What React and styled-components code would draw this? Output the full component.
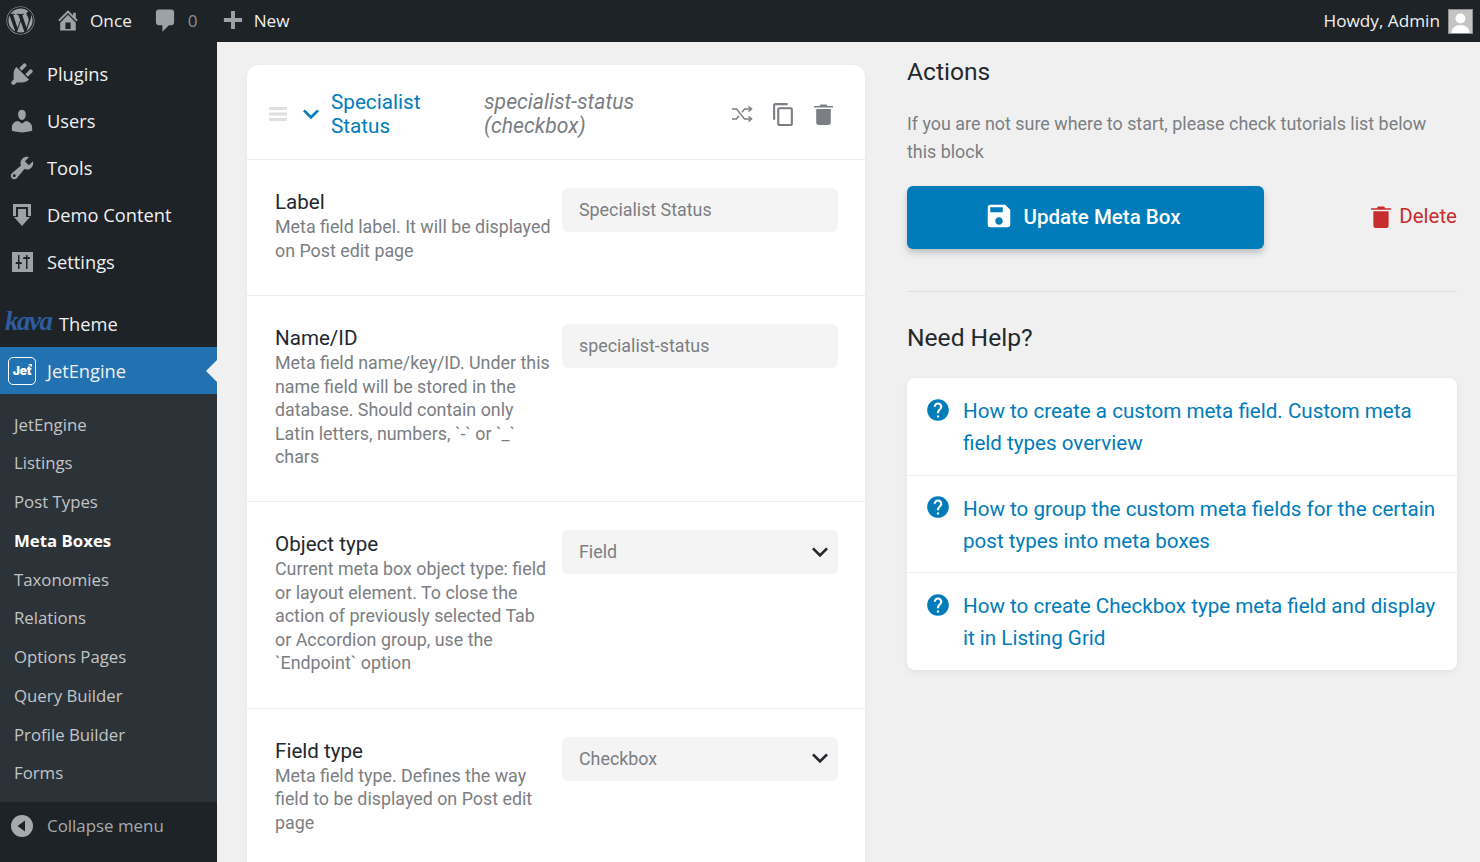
import React from "react";
import styled, { createGlobalStyle } from "styled-components";
import { MdContentCopy, MdSave, MdHelp, MdExpandMore } from "react-icons/md";
import { FaWordpress } from "react-icons/fa";

const GlobalStyle = createGlobalStyle`
  html, body { margin: 0; padding: 0; height: 100%; overflow: hidden; background: #f0f0f1; }
  * { box-sizing: border-box; }
  #root { height: 862px; overflow: hidden; }
`;

const Page = styled.div`
  width: 1480px;
  height: 862px;
  display: flex;
  flex-direction: column;
  overflow: hidden;
  font-family: Roboto, "Liberation Sans", sans-serif;
`;

const TopBar = styled.header`
  height: 42px;
  flex: none;
  background: #1d2327;
  display: flex;
  align-items: center;
  padding: 0 7px 2px 6px;
  font-family: "Open Sans", "Noto Sans", sans-serif;
  font-size: 17.2px;
  color: #f0f0f1;
  white-space: nowrap;
`;

const BarItem = styled.div`
  display: flex;
  align-items: center;
  gap: ${(p) => p.$gap ?? 9}px;
  margin-left: ${(p) => p.$left || 0}px;
  color: ${(p) => (p.$muted ? "#8c8f94" : "#f0f0f1")};
  svg { color: #9ca2a7; flex: none; }
`;

const BarAccount = styled(BarItem)`
  margin-left: auto;
`;

const Avatar = styled.div`
  width: 25px;
  height: 25px;
  margin: 2px 0 0 8px;
  background: #c4c4c4;
  border: 1px solid #8c8f94;
  display: flex;
  align-items: flex-end;
  justify-content: center;
  overflow: hidden;
  svg { color: #fff; }
`;

const Body = styled.div`
  flex: 1;
  display: flex;
  min-height: 0;
`;

const Sidebar = styled.aside`
  width: 217px;
  flex: none;
  background: #1d2327;
  padding-top: 8px;
  display: flex;
  flex-direction: column;
  font-family: "Open Sans", "Noto Sans", sans-serif;
`;

const MenuItem = styled.div`
  position: relative;
  height: 47px;
  flex: none;
  display: flex;
  align-items: center;
  padding-left: ${(p) => (p.$pad === undefined ? 8 : p.$pad)}px;
  gap: 11px;
  font-size: 18.3px;
  color: #f0f0f1;
  background: ${(p) => (p.$active ? "#2271b1" : "transparent")};
  margin-top: ${(p) => p.$top || 0}px;
`;

const MenuIcon = styled.span`
  width: 28px;
  height: 28px;
  flex: none;
  display: flex;
  align-items: center;
  justify-content: center;
  color: #9ca2a7;
`;

const ActiveArrow = styled.span`
  position: absolute;
  right: 0;
  top: 50%;
  margin-top: -11px;
  border: 11px solid transparent;
  border-left: 0;
  border-right-color: #f0f0f1;
`;

const KavaLogo = styled.span`
  width: 43px;
  flex: none;
  font-family: "Liberation Serif", serif;
  font-style: italic;
  font-weight: 700;
  font-size: 27px;
  letter-spacing: -1.5px;
  color: #2d5d9f;
  position: relative;
  top: -2px;
`;

const JetLogo = styled.span`
  position: relative;
  width: 28px;
  height: 28px;
  flex: none;
  border: 1.5px solid #fff;
  border-radius: 5px;
  display: flex;
  align-items: center;
  justify-content: center;
  font-family: Inter, sans-serif;
  font-weight: 900;
  font-size: 12px;
  letter-spacing: -0.3px;
  color: #fff;
  &::after {
    content: "";
    position: absolute;
    top: 6px;
    right: 3px;
    border-top: 3px solid #fff;
    border-left: 4px solid transparent;
  }
`;

const SubMenu = styled.div`
  background: #2c3338;
  height: 408px;
  flex: none;
  padding-top: 10.7px;
`;

const SubItem = styled.div`
  height: 38.75px;
  display: flex;
  align-items: center;
  padding-left: 14px;
  font-size: 16.8px;
  color: ${(p) => (p.$current ? "#fff" : "#c3c4c7")};
  font-weight: ${(p) => (p.$current ? 700 : 400)};
`;

const Collapse = styled(MenuItem)`
  color: #a7aaad;
  font-size: 16.9px;
`;

const Main = styled.main`
  flex: 1;
  display: flex;
  min-width: 0;
  padding: 23px 23px 0 30px;
  gap: 42px;
`;

const Card = styled.section`
  width: 618px;
  flex: none;
  background: #fff;
  border-radius: 12px 12px 0 0;
  box-shadow: 0 2px 6px rgba(35, 40, 45, 0.03);
  align-self: flex-start;
`;

const CardHeader = styled.div`
  height: 95px;
  display: flex;
  align-items: center;
  border-bottom: 1px solid #ececec;
  padding: 4px 0 0 22px;
  color: #7e8993;
`;

const ChevronIcon = styled(MdExpandMore)`
  color: #007cba;
  margin-left: 8px;
  flex: none;
`;

const FieldTitle = styled.div`
  width: 153px;
  margin-left: 4px;
  font-size: 20.7px;
  line-height: 24px;
  color: #007cba;
`;

const FieldSlug = styled.div`
  width: 230px;
  font-size: 21.2px;
  line-height: 24px;
  font-style: italic;
  color: #7b7e82;
`;

const HeaderActions = styled.div`
  display: flex;
  align-items: center;
  margin-left: 17px;
  gap: 18px;
  color: #7b7e82;
  svg { flex: none; }
`;

const Row = styled.div`
  display: flex;
  align-items: flex-start;
  padding: 28px 27px 33px 28px;
  height: ${(p) => p.$height}px;
  border-bottom: 1px solid #ececec;
`;

const RowInfo = styled.div`
  width: 287px;
  flex: none;
  padding-right: 8px;
`;

const RowLabel = styled.div`
  padding-top: 2px;
  font-size: 20.6px;
  line-height: 25px;
  color: #23282d;
`;

const RowDesc = styled.div`
  font-size: 17.85px;
  line-height: 23.5px;
  color: #7b7e82;
`;

const InputBox = styled.div`
  width: 276px;
  height: 44px;
  background: #f4f4f4;
  border-radius: 6px;
  display: flex;
  align-items: center;
  justify-content: space-between;
  padding: 0 2px 1px 17px;
  font-size: 17.85px;
  color: #7b7e82;
  svg { color: #23282d; }
`;

const Side = styled.div`
  width: 550px;
  flex: none;
`;

const SideTitle = styled.h2`
  margin: ${(p) => p.$top || 0}px 0 0;
  font-weight: 400;
  font-size: 24.6px;
  line-height: 14px;
  color: #23282d;
`;

const SideText = styled.p`
  margin: 31px 0 0;
  font-size: 17.9px;
  line-height: 27.5px;
  color: #7b7e82;
`;

const ActionRow = styled.div`
  margin-top: 21px;
  display: flex;
  align-items: center;
  justify-content: space-between;
  padding-bottom: 42px;
  border-bottom: 1px solid #dcdcdd;
`;

const SaveButton = styled.div`
  width: 357px;
  height: 63px;
  background: #007cba;
  border-radius: 6px;
  box-shadow: 0 4px 6px rgba(35, 40, 45, 0.24);
  color: #fff;
  font-size: 20.5px;
  font-weight: 500;
  display: flex;
  align-items: center;
  justify-content: center;
  gap: 10px;
  padding: 0 7px 2px 0;
  svg { margin-top: -1px; }
`;

const DeleteLink = styled.div`
  display: flex;
  align-items: center;
  gap: 8px;
  font-size: 20.5px;
  color: #c92c2c;
  margin-top: -3px;
`;

const HelpCard = styled.div`
  margin-top: 33px;
  background: #fff;
  border-radius: 8px;
  box-shadow: 0 2px 6px rgba(35, 40, 45, 0.07);
`;

const HelpItem = styled.div`
  display: flex;
  gap: 12px;
  padding: 17px 20px 15.5px 18px;
  border-top: ${(p) => (p.$first ? "none" : "1px solid #ececec")};
  font-size: 20.6px;
  line-height: 32px;
  color: #007cba;
  svg { flex: none; margin-top: 1.5px; }
`;

const HomeIcon = () => (
  <svg width="26" height="26" viewBox="0 0 20 20" fill="currentColor">
    <path d="M16 8.5l1.53 1.53-1.06 1.06L10 4.62l-6.47 6.47-1.06-1.06L10 2.5l4 4v-2h2v4zm-6-2.46l6 5.99V18H4v-5.97zM12 17v-5H8v5h4z" />
  </svg>
);

const CommentIcon = () => (
  <svg width="26" height="26" viewBox="0 0 20 20" fill="currentColor">
    <path d="M5 2h10c1.1 0 2 .9 2 2v8c0 1.1-.9 2-2 2h-2l-5 5v-5H5c-1.1 0-2-.9-2-2V4c0-1.100.9-2 2-2z" />
  </svg>
);

const PlusIcon = () => (
  <svg width="26" height="26" viewBox="0 0 20 20" fill="currentColor">
    <path d="M17 8.500v3h-5.500V17h-3v-5.500H3v-3h5.500V3h3v5.500z" />
  </svg>
);

const PluginIcon = () => (
  <svg width="28" height="28" viewBox="0 0 20 20" fill="currentColor">
    <path d="M13.110 4.360L9.870 7.600 8 5.730l3.240-3.240c.35-.34 1.050-.2 1.560.32.520.51.660 1.210.310 1.550zm-8 1.770l.910-1.120 9.010 9.010-1.190.84c-.710.710-2.630 1.160-3.820 1.160H6.140L4.900 17.260c-.590.590-1.540.590-2.120 0-.590-.580-.590-1.530 0-2.120l1.240-1.240v-3.880c0-1.130.4-3.190 1.090-3.890zm7.260 3.970l3.240-3.240c.34-.35 1.040-.21 1.550.31.520.51.660 1.210.310 1.550l-3.240 3.250z" />
  </svg>
);

const UserIcon = () => (
  <svg width="28" height="28" viewBox="0 0 20 20" fill="currentColor">
    <path d="M10 9.250c-2.270 0-2.730-3.440-2.730-3.440C7 4.020 7.820 2 9.970 2c2.160 0 2.980 2.020 2.710 3.810 0 0-.41 3.440-2.680 3.440zm0 2.570L12.720 10c2.390 0 4.520 2.330 4.520 4.530v2.490s-3.650 1.130-7.240 1.130c-3.650 0-7.240-1.130-7.240-1.130v-2.490c0-2.250 1.940-4.480 4.470-4.480z" />
  </svg>
);

const WrenchIcon = () => (
  <svg width="28" height="28" viewBox="0 0 20 20" fill="currentColor">
    <path d="M16.680 9.770c-1.340 1.340-3.300 1.670-4.950.99l-5.410 6.520c-.99.990-2.590.99-3.580 0s-.99-2.590 0-3.580l6.520-5.420c-.68-1.650-.35-3.610.99-4.950 1.280-1.280 3.120-1.620 4.720-1.060l-2.890 2.890 2.820 2.820 2.860-2.870c.53 1.580.18 3.390-1.080 4.660zM3.810 16.210c.4.390 1.040.39 1.430 0 .4-.4.400-1.040 0-1.430-.39-.4-1.030-.4-1.430 0-.39.390-.39 1.030 0 1.430z" />
  </svg>
);

const DemoIcon = () => (
  <svg width="20" height="24" viewBox="0 0 20 24" fill="currentColor">
    <path d="M1 1h18v12h-3V4H4v9H1z" />
    <path d="M6 6h8v8h4l-8 9-8-9h4z" />
  </svg>
);

const SettingsIcon = () => (
  <svg width="24" height="22" viewBox="0 0 24 22" fill="currentColor">
    <path fillRule="evenodd" d="M2 1h21v20H2zM8 4v7H6l-.500 2H8v5h1.500v-5h2.500l-.500-2H9.500V4zM16 4v2h-2.500l-.500 2h3v10h1.500V8H20l-.500-2h-2V4z" />
  </svg>
);

const CollapseIcon = () => (
  <svg width="24" height="24" viewBox="0 0 24 24">
    <circle cx="12" cy="12" r="11" fill="#a7aaad" />
    <path d="M15 6.500v11L7.500 12z" fill="#1d2327" />
  </svg>
);

const AvatarFigure = () => (
  <svg width="23" height="23" viewBox="0 0 23 23" fill="currentColor">
    <circle cx="11.500" cy="8.500" r="5" />
    <path d="M2.500 23c0-5 3.500-8 9-8s9 3 9 8z" />
  </svg>
);

const DragLines = () => (
  <svg width="18" height="14" viewBox="0 0 18 14" fill="#dfdfdf" style={{ flex: "none" }}>
    <rect y="0" width="18" height="3" />
    <rect y="5.500" width="18" height="3" />
    <rect y="11" width="18" height="3" />
  </svg>
);

const ShuffleIcon = () => (
  <svg width="22" height="16" viewBox="0 0 22 16" fill="none" stroke="currentColor" strokeWidth="1.500">
    <path d="M1 3h4.500l8 10H20M1 13h4.500l2.500-3.200M11 6.200L13.500 3H20" />
    <path d="M17.500 .5L20.500 3l-3 2.500M17.500 10.500l3 2.500-3 2.500" />
  </svg>
);

const TrashIcon = ({ width, height }) => (
  <svg width={width} height={height} viewBox="0 0 19 22" fill="currentColor">
    <path d="M0 3h5.500l1-1.500h6l1 1.500H19v1.500H0z" />
    <path d="M2.200 6h14.600v13.500c0 1.400-1 2.500-2.400 2.500H4.600c-1.400 0-2.400-1.100-2.400-2.500z" />
  </svg>
);

const primaryMenu = [
  { label: "Plugins", icon: <PluginIcon /> },
  { label: "Users", icon: <UserIcon /> },
  { label: "Tools", icon: <WrenchIcon /> },
  { label: "Demo Content", icon: <DemoIcon /> },
  { label: "Settings", icon: <SettingsIcon /> },
];

const subMenu = [
  "JetEngine",
  "Listings",
  "Post Types",
  "Meta Boxes",
  "Taxonomies",
  "Relations",
  "Options Pages",
  "Query Builder",
  "Profile Builder",
  "Forms",
];

const fields = [
  {
    label: "Label",
    desc: "Meta field label. It will be displayed on Post edit page",
    value: "Specialist Status",
    height: 136,
  },
  {
    label: "Name/ID",
    desc: "Meta field name/key/ID. Under this name field will be stored in the database. Should contain only Latin letters, numbers, `-` or `_` chars",
    value: "specialist-status",
    height: 206,
  },
  {
    label: "Object type",
    desc: "Current meta box object type: field or layout element. To close the action of previously selected Tab or Accordion group, use the `Endpoint` option",
    value: "Field",
    select: true,
    height: 206.5,
  },
  {
    label: "Field type",
    desc: "Meta field type. Defines the way field to be displayed on Post edit page",
    value: "Checkbox",
    select: true,
    height: 170,
  },
];

const helpLinks = [
  "How to create a custom meta field. Custom meta field types overview",
  "How to group the custom meta fields for the certain post types into meta boxes",
  "How to create Checkbox type meta field and display it in Listing Grid",
];

const App = () => (
  <Page>
    <GlobalStyle />
    <TopBar>
      <BarItem>
        <FaWordpress size={29} />
      </BarItem>
      <BarItem $left={20}>
        <HomeIcon />
        Once
      </BarItem>
      <BarItem $left={20} $gap={10} $muted>
        <CommentIcon />
        0
      </BarItem>
      <BarItem $left={22} $gap={8}>
        <PlusIcon />
        New
      </BarItem>
      <BarAccount $gap={0}>
        Howdy, Admin
        <Avatar>
          <AvatarFigure />
        </Avatar>
      </BarAccount>
    </TopBar>
    <Body>
      <Sidebar>
        {primaryMenu.map((item) => (
          <MenuItem key={item.label}>
            <MenuIcon>{item.icon}</MenuIcon>
            {item.label}
          </MenuItem>
        ))}
        <MenuItem $top={15} $pad={5}>
          <KavaLogo>kava</KavaLogo>
          Theme
        </MenuItem>
        <MenuItem $active>
          <JetLogo>Jet</JetLogo>
          JetEngine
          <ActiveArrow />
        </MenuItem>
        <SubMenu>
          {subMenu.map((item) => (
            <SubItem key={item} $current={item === "Meta Boxes"}>
              {item}
            </SubItem>
          ))}
        </SubMenu>
        <Collapse>
          <MenuIcon>
            <CollapseIcon />
          </MenuIcon>
          Collapse menu
        </Collapse>
      </Sidebar>
      <Main>
        <Card>
          <CardHeader>
            <DragLines />
            <ChevronIcon size={32} />
            <FieldTitle>Specialist Status</FieldTitle>
            <FieldSlug>specialist-status (checkbox)</FieldSlug>
            <HeaderActions>
              <ShuffleIcon />
              <MdContentCopy size={25} />
              <TrashIcon width={19} height={22} />
            </HeaderActions>
          </CardHeader>
          {fields.map((field) => (
            <Row key={field.label} $height={field.height}>
              <RowInfo>
                <RowLabel>{field.label}</RowLabel>
                <RowDesc>{field.desc}</RowDesc>
              </RowInfo>
              <InputBox>
                {field.value}
                {field.select && <MdExpandMore size={32} />}
              </InputBox>
            </Row>
          ))}
        </Card>
        <Side>
          <SideTitle>Actions</SideTitle>
          <SideText>If you are not sure where to start, please check tutorials list below this block</SideText>
          <ActionRow>
            <SaveButton>
              <MdSave size={30} />
              Update Meta Box
            </SaveButton>
            <DeleteLink>
              <TrashIcon width={20} height={23} />
              Delete
            </DeleteLink>
          </ActionRow>
          <SideTitle $top={39}>Need Help?</SideTitle>
          <HelpCard>
            {helpLinks.map((link, i) => (
              <HelpItem key={link} $first={i === 0}>
                <MdHelp size={26} />
                {link}
              </HelpItem>
            ))}
          </HelpCard>
        </Side>
      </Main>
    </Body>
  </Page>
);

export default App;
